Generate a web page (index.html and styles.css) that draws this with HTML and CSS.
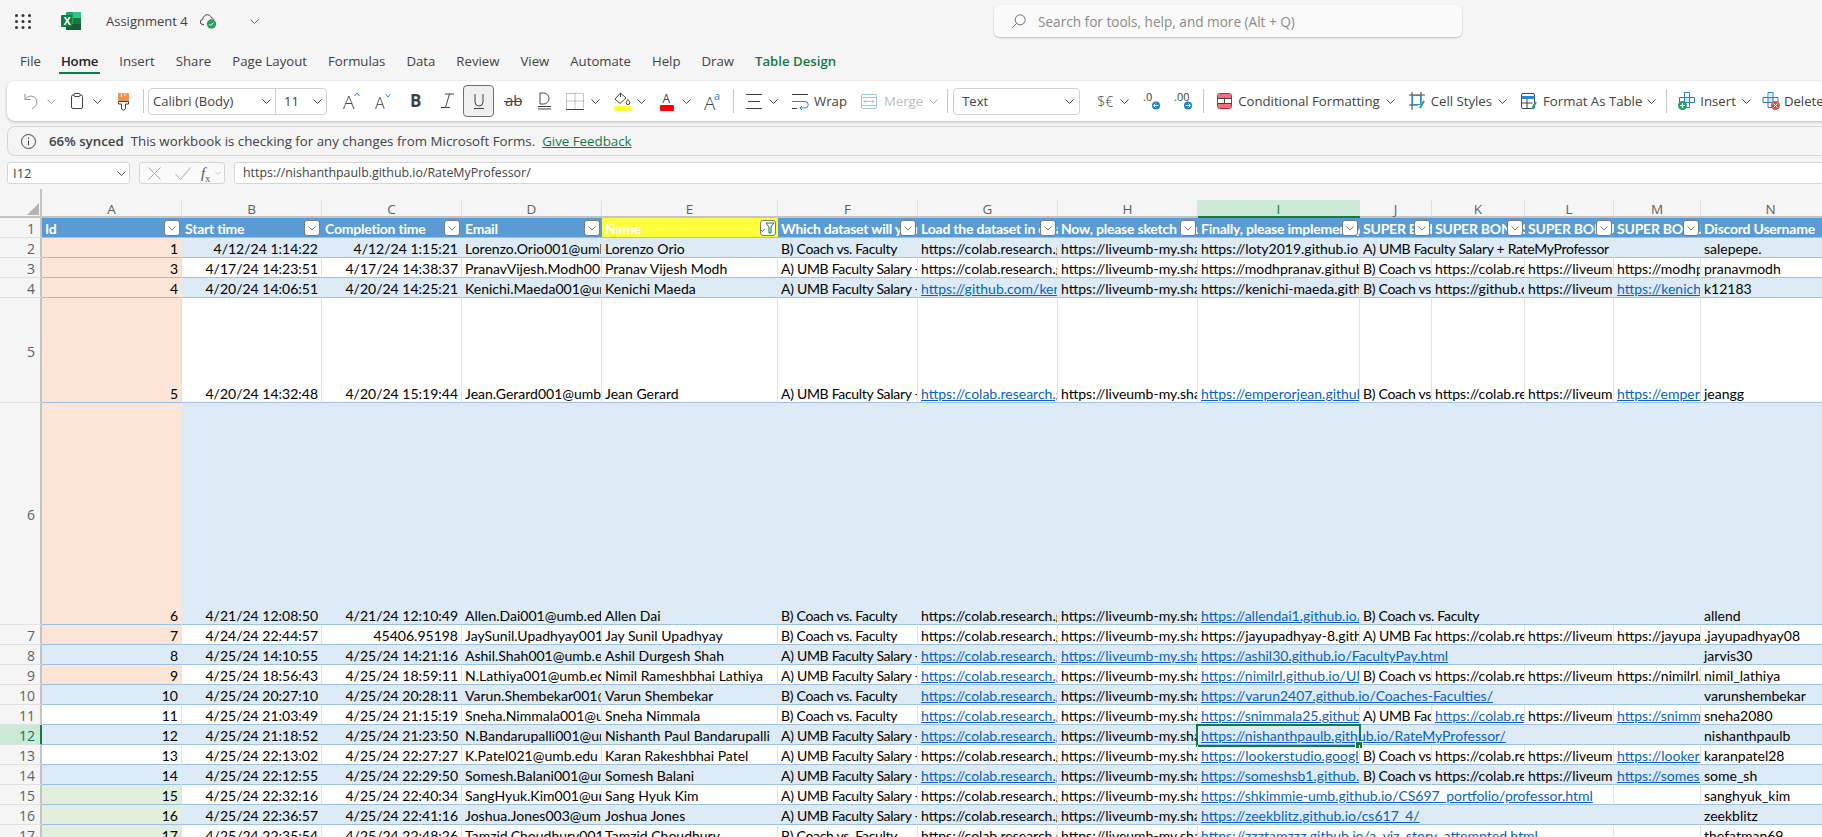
FILE: index.html
```html
<!DOCTYPE html>
<html lang="en">
<head>
<meta charset="utf-8">
<title>Assignment 4</title>
<link rel="stylesheet" href="styles.css">
</head>
<body>
<svg class="defs" width="0" height="0" aria-hidden="true">
  <symbol id="chev" viewBox="0 0 9 5"><path d="M.5.5l4 4 4-4" fill="none" stroke="currentColor"/></symbol>
</svg>
<div class="app">
  <header class="topbar">
    <svg class="apps" width="16" height="15" viewBox="0 0 16 15" fill="#333"><circle cx="1.5" cy="1.5" r="1.5"/><circle cx="8" cy="1.5" r="1.5"/><circle cx="14.5" cy="1.5" r="1.5"/><circle cx="1.5" cy="7.5" r="1.5"/><circle cx="8" cy="7.5" r="1.5"/><circle cx="14.5" cy="7.5" r="1.5"/><circle cx="1.5" cy="13.5" r="1.5"/><circle cx="8" cy="13.5" r="1.5"/><circle cx="14.5" cy="13.5" r="1.5"/></svg>
    <svg class="xl" width="20" height="18" viewBox="0 0 20 18"><rect x="5" width="15" height="18" rx="1" fill="#21a366"/><rect x="12" width="8" height="6" fill="#33c481"/><rect x="5" y="12" width="15" height="6" fill="#185c37"/><rect x="12" y="6" width="8" height="6" fill="#107c41"/><rect y="3" width="11" height="12" rx="1" fill="#107c41"/><text x="2.4" y="13" class="xl-x">X</text></svg>
    <span class="doc">Assignment 4</span>
    <svg class="cloud" width="17" height="15" viewBox="0 0 17 15"><path d="M4 10.5H3a2.5 2.5 0 0 1-.3-5C3 2.5 5 .7 7.200.7c2 0 3.700 1.300 4.300 3.200 1.300.2 2.200 1.100 2.500 2.100" fill="none" stroke="#424242"/><circle cx="11.500" cy="10" r="4.700" fill="#2f9e5b"/><path d="M9.300 10l1.500 1.500 2.700-2.800" fill="none" stroke="#fff"/></svg>
    <svg class="doc-chev" width="9" height="5"><use href="#chev"/></svg>
    <div class="search">
      <svg width="15" height="15" viewBox="0 0 15 15" fill="none" stroke="#707070"><circle cx="9.200" cy="5.800" r="5"/><path d="M5.500 9.500L.8 14.200"/></svg>
      <span>Search for tools, help, and more (Alt + Q)</span>
    </div>
  </header>

  <nav class="tabs">
    <span>File</span><span class="tab-on">Home</span><span>Insert</span><span>Share</span><span>Page Layout</span><span>Formulas</span><span>Data</span><span>Review</span><span>View</span><span>Automate</span><span>Help</span><span>Draw</span><span class="tab-ctx">Table Design</span>
  </nav>

  <div class="ribbon">
    <svg width="14" height="16" viewBox="0 0 14 16" fill="none" stroke="#8f8f8f"><path d="M1 1v5.500h5.500M1 6.500C3 3.500 6 2.500 9 3.500c3.500 1.500 4.500 5 3.500 8-.7 1.800-2.500 3.300-4.500 4"/></svg>
    <svg class="chev g9 dim" width="9" height="5"><use href="#chev"/></svg>
    <svg class="g15" width="12" height="16" viewBox="0 0 12 16" fill="none" stroke="#424242"><rect x=".5" y="2" width="11" height="13.500" rx="1.500"/><rect x="3" y=".5" width="6" height="3" rx="1" fill="#fff"/></svg>
    <svg class="chev g10" width="9" height="5"><use href="#chev"/></svg>
    <svg class="g16" width="11" height="17" viewBox="0 0 11 17"><rect width="11" height="8" rx="1" fill="#f0914f"/><path d="M3.500 0v4M7 0v3" stroke="#fff" stroke-width=".8"/><path d="M.5 8.500h10v2.500H7.500v4a2 2 0 0 1-4 0v-4h-3z" fill="#fff" stroke="#424242"/></svg>
    <i class="vr g14"></i>
    <div class="select font-select g4">
      <span class="fs-name">Calibri (Body)<svg class="chev" width="9" height="5"><use href="#chev"/></svg></span>
      <span class="fs-size">11<svg class="chev" width="9" height="5"><use href="#chev"/></svg></span>
    </div>
    <svg class="g16" width="18" height="20" viewBox="0 0 18 20"><text x="0" y="18" class="gl gl-a">A</text><path d="M11.500 5l2.500-3 2.500 3" fill="none" stroke="#2b88d8"/></svg>
    <svg class="g14" width="17" height="20" viewBox="0 0 17 20"><text x="0" y="18" class="gl gl-a2">A</text><path d="M10.500 3l2.500 3 2.500-3" fill="none" stroke="#2b88d8"/></svg>
    <svg class="g18" width="11" height="18" viewBox="0 0 11 18"><text x="0" y="15" class="gl gl-b">B</text></svg>
    <svg class="g20" width="13" height="18" viewBox="0 0 13 18" fill="none" stroke="#424242"><path d="M4 2h9M0 15.500h9M8.500 2L4.500 15.500"/></svg>
    <span class="u-btn g9"><svg width="12" height="17" viewBox="0 0 12 17" fill="none" stroke="#424242"><path d="M2 1v8a4 4 0 0 0 8 0V1M1 15.500h10"/></svg></span>
    <svg class="g10" width="18" height="20" viewBox="0 0 18 20"><text x="1" y="15" class="gl gl-ab">ab</text><path d="M0 10.500h18" stroke="#424242"/></svg>
    <svg class="g16" width="13" height="18" viewBox="0 0 13 18" fill="none" stroke="#424242"><path d="M2 1v11h3.500a5.500 5.500 0 0 0 0-11zM0 14.500h13M0 17h13"/></svg>
    <svg class="g15" width="18" height="17" viewBox="0 0 18 17" fill="none" stroke="#8a8a8a" stroke-dasharray="1 1"><path d="M.5.500h17v15M.5.500v15M9 .5v15M.5 8h17"/><path d="M0 16.500h18" stroke="#424242" stroke-dasharray="none"/></svg>
    <svg class="chev g7" width="9" height="5"><use href="#chev"/></svg>
    <svg class="g14" width="17" height="19" viewBox="0 0 17 19"><path d="M6.500 1L1 7l5 4.500L12 6zM6.500 1v4" fill="none" stroke="#424242"/><path d="M14 7.500c1 1.500 1.800 2.300 1.800 3.300a1.800 1.800 0 0 1-3.600 0c0-1 .8-1.800 1.800-3.300z" fill="none" stroke="#424242"/><rect y="14" width="17" height="5" rx="1" fill="#ffff3b"/></svg>
    <svg class="chev g6" width="9" height="5"><use href="#chev"/></svg>
    <svg class="g14" width="14" height="20" viewBox="0 0 14 20"><text x="2.500" y="12" class="gl gl-fc">A</text><rect y="14" width="14" height="6" rx="1" fill="#f00"/></svg>
    <svg class="chev g8" width="9" height="5"><use href="#chev"/></svg>
    <svg class="g13" width="16" height="20" viewBox="0 0 16 20"><text x="0" y="19" class="gl gl-a">A</text><text x="10" y="9" class="gl gl-sup">a</text></svg>
    <i class="vr g13"></i>
    <svg class="g12" width="16" height="15" viewBox="0 0 16 15" stroke="#424242"><path d="M0 .5h16M2 7.500h12M0 14.500h16"/></svg>
    <svg class="chev g7" width="9" height="5"><use href="#chev"/></svg>
    <svg class="g14" width="16" height="15" viewBox="0 0 16 15" fill="none"><path d="M0 .5h16M0 14.500h5" stroke="#424242"/><path d="M0 7.500h13a2.800 2.800 0 0 1 0 6.500H8m2-2l-2 2 2 2" stroke="#2b88d8"/></svg>
    <span class="lbl g6">Wrap</span>
    <svg class="g14" width="16" height="15" viewBox="0 0 16 15" fill="none" stroke="#9cc7e6"><rect x=".5" y=".5" width="15" height="14" rx="1.500"/><path d="M3 7.500h10M5 5.500l-2 2 2 2M11 5.500l2 2-2 2M.5 3.500h15M.5 11.500h15"/></svg>
    <span class="lbl lbl-off g7">Merge</span>
    <svg class="chev g6 dim" width="9" height="5"><use href="#chev"/></svg>
    <i class="vr g9"></i>
    <div class="select fmt-select g5"><span>Text</span><svg class="chev" width="9" height="5"><use href="#chev"/></svg></div>
    <span class="lbl currency g17">$€</span>
    <svg class="chev g7" width="9" height="5"><use href="#chev"/></svg>
    <svg class="g14" width="17" height="18" viewBox="0 0 17 18"><text x="0" y="9" class="gl gl-d">.0</text><circle cx="13" cy="13.500" r="4" fill="#1f7fc4"/><path d="M15.500 13.500h-5m2-2l-2 2 2 2" fill="none" stroke="#fff"/></svg>
    <svg class="g14" width="18" height="18" viewBox="0 0 18 18"><text x="0" y="9" class="gl gl-d">.00</text><circle cx="14" cy="13.500" r="4" fill="#1f7fc4"/><path d="M11.500 13.500h5m-2-2l2 2-2 2" fill="none" stroke="#fff"/></svg>
    <i class="vr g11"></i>
    <svg class="g13" width="15" height="16" viewBox="0 0 15 16"><rect x=".5" y=".5" width="14" height="15" rx="2" fill="#fff" stroke="#c4262e"/><rect x="1" y="1" width="13" height="4" fill="#f1707b"/><rect x="1" y="10" width="13" height="5" fill="#f1707b"/><path d="M.5 5.500h14M.5 10.500h14M7.500 5.500v5" stroke="#424242"/></svg>
    <span class="lbl g6">Conditional Formatting</span>
    <svg class="chev g6" width="9" height="5"><use href="#chev"/></svg>
    <svg class="g14" width="16" height="18" viewBox="0 0 16 18" fill="none" stroke="#424242"><path d="M3 0v18M12 0v11M0 3h16M0 13h9"/><path d="M3.500 3.500h8v9h-8z" stroke="#2b88d8"/><path d="M15 9l-4 7" stroke="#21a366" stroke-width="2"/></svg>
    <span class="lbl g6">Cell Styles</span>
    <svg class="chev g6" width="9" height="5"><use href="#chev"/></svg>
    <svg class="g14" width="16" height="17" viewBox="0 0 16 17" fill="none" stroke="#424242"><rect x=".5" y=".5" width="13" height="15" rx="1.500"/><path d="M.5 4.500h13" stroke="#2b88d8" stroke-width="3"/><path d="M.5 10h11M6 6v10"/><path d="M15 9l-4 7" stroke="#21a366" stroke-width="2"/></svg>
    <span class="lbl g6">Format As Table</span>
    <svg class="chev g5" width="9" height="5"><use href="#chev"/></svg>
    <i class="vr g10"></i>
    <svg class="g11" width="17" height="18" viewBox="0 0 17 18" fill="none"><path d="M6.500.5h5v5h5v5h-5v5h-5v-5h-5v-5h5z" stroke="#1f7fc4" fill="#fff"/><path d="M6.500 5.500h5v5h-5z" fill="#cfe6f7" stroke="#1f7fc4"/><circle cx="4.500" cy="13.500" r="4.500" fill="#21a366"/><path d="M2 13.500h5M4.500 11v5" stroke="#fff"/></svg>
    <span class="lbl g5">Insert</span>
    <svg class="chev g6" width="9" height="5"><use href="#chev"/></svg>
    <svg class="g12" width="17" height="18" viewBox="0 0 17 18" fill="none"><path d="M5 .5h5v5h5v5h-5v5H5v-5H0v-5h5z" stroke="#1f7fc4" fill="#fff"/><path d="M5 5.500h5v5H5z" fill="#cfe6f7" stroke="#1f7fc4"/><circle cx="12.500" cy="13.500" r="4.500" fill="#e0533f"/><path d="M10.500 11.500l4 4m0-4l-4 4" stroke="#fff"/></svg>
    <span class="lbl g4">Delete</span>
  </div>

  <div class="banner">
    <svg width="15" height="15" viewBox="0 0 15 15" fill="none" stroke="#424242"><circle cx="7.500" cy="7.500" r="7"/><path d="M7.500 6.500v5M7.500 3.500v1.500"/></svg>
    <b>66% synced</b>
    <span class="msg">This workbook is checking for any changes from Microsoft Forms.</span>
    <a class="fb">Give Feedback</a>
  </div>

  <div class="fbar">
    <div class="namebox"><span>I12</span><svg class="chev" width="9" height="5"><use href="#chev"/></svg></div>
    <div class="fbtns">
      <svg width="13" height="13" viewBox="0 0 13 13" stroke="#a8a8a8"><path d="M.5.5l12 12M12.500.5l-12 12"/></svg>
      <svg class="fchk" width="16" height="13" viewBox="0 0 16 13" fill="none" stroke="#a8a8a8"><path d="M.5 7l5 5.500L15.500.5"/></svg>
      <span class="fx"><em>f</em><sub>x</sub></span>
      <svg class="chev dim fxc" width="6" height="4" viewBox="0 0 9 5"><use href="#chev"/></svg>
    </div>
    <div class="finput">https://nishanthpaulb.github.io/RateMyProfessor/</div>
  </div>

  <div class="sheet">
    <table class="grid">
      <colgroup>
        <col class="c-rh"><col class="c-140"><col class="c-140"><col class="c-140"><col class="c-140"><col class="c-176"><col class="c-140"><col class="c-140"><col class="c-140"><col class="c-i"><col class="c-j"><col class="c-k"><col class="c-l"><col class="c-m"><col class="c-n">
      </colgroup>
      <thead>
        <tr class="lead">
          <th class="corner"><svg width="12" height="12" viewBox="0 0 12 12"><path d="M12 0v12H0z" fill="#b4b4b4"/></svg></th>
          <th><span>A</span></th><th><span>B</span></th><th><span>C</span></th><th><span>D</span></th><th><span>E</span></th><th><span>F</span></th><th><span>G</span></th><th><span>H</span></th><th class="col-sel"><span>I</span></th><th><span>J</span></th><th><span>K</span></th><th><span>L</span></th><th><span>M</span></th><th><span>N</span></th>
        </tr>
      </thead>
      <tbody>
        <tr class="tblhead">
          <th class="rh">1</th>
          <td>Id<i class="fbtn"><svg width="9" height="5"><use href="#chev"/></svg></i></td>
          <td>Start time<i class="fbtn"><svg width="9" height="5"><use href="#chev"/></svg></i></td>
          <td>Completion time<i class="fbtn"><svg width="9" height="5"><use href="#chev"/></svg></i></td>
          <td>Email<i class="fbtn"><svg width="9" height="5"><use href="#chev"/></svg></i></td>
          <td class="yel">Name<i class="fbtn"><svg class="funnel" width="14" height="12" viewBox="0 0 14 12" fill="none" stroke="#107c41"><path d="M5 1h8L10 5v6H8V5zM0 8l1.500 1.500L3.500 7"/></svg></i></td>
          <td>Which dataset will you be using?<i class="fbtn"><svg width="9" height="5"><use href="#chev"/></svg></i></td>
          <td>Load the dataset in colab notebook<i class="fbtn"><svg width="9" height="5"><use href="#chev"/></svg></i></td>
          <td>Now, please sketch your visualization<i class="fbtn"><svg width="9" height="5"><use href="#chev"/></svg></i></td>
          <td>Finally, please implement your visualization<i class="fbtn"><svg width="9" height="5"><use href="#chev"/></svg></i></td>
          <td>SUPER BONUS<i class="fbtn"><svg width="9" height="5"><use href="#chev"/></svg></i></td>
          <td>SUPER BONUS 2<i class="fbtn"><svg width="9" height="5"><use href="#chev"/></svg></i></td>
          <td>SUPER BONUS 3<i class="fbtn"><svg width="9" height="5"><use href="#chev"/></svg></i></td>
          <td>SUPER BONUS 4<i class="fbtn"><svg width="9" height="5"><use href="#chev"/></svg></i></td>
          <td>Discord Username</td>
        </tr>
        <tr class="band">
          <th class="rh">2</th><td class="num or">1</td><td class="num">4/12/24 1:14:22</td><td class="num">4/12/24 1:15:21</td><td>Lorenzo.Orio001@umb.edu</td><td>Lorenzo Orio</td><td class="ds">B) Coach vs. Faculty</td><td>https://colab.research.google.com/</td><td>https://liveumb-my.sharepoint.com/</td><td>https://loty2019.github.io/</td><td colspan="4" class="ds">A) UMB Faculty Salary + RateMyProfessor</td><td>salepepe.</td>
        </tr>
        <tr>
          <th class="rh">3</th><td class="num or">3</td><td class="num">4/17/24 14:23:51</td><td class="num">4/17/24 14:38:37</td><td>PranavVijesh.Modh001@umb.edu</td><td>Pranav Vijesh Modh</td><td class="ds">A) UMB Faculty Salary - RMP</td><td>https://colab.research.google.com/</td><td>https://liveumb-my.sharepoint.com/</td><td>https://modhpranav.github.io/</td><td class="ds">B) Coach vs. Faculty</td><td>https://colab.research</td><td>https://liveumb-my</td><td>https://modhpranav</td><td>pranavmodh</td>
        </tr>
        <tr class="band">
          <th class="rh">4</th><td class="num or">4</td><td class="num">4/20/24 14:06:51</td><td class="num">4/20/24 14:25:21</td><td>Kenichi.Maeda001@umb.edu</td><td>Kenichi Maeda</td><td class="ds">A) UMB Faculty Salary - RMP</td><td><a>https://github.com/kenichi-maeda</a></td><td>https://liveumb-my.sharepoint.com/</td><td>https://kenichi-maeda.github.io/</td><td class="ds">B) Coach vs. Faculty</td><td>https://github.com/kenichi</td><td>https://liveumb-my</td><td><a>https://kenichi-maeda</a></td><td>k12183</td>
        </tr>
        <tr class="h105">
          <th class="rh">5</th><td class="num or">5</td><td class="num">4/20/24 14:32:48</td><td class="num">4/20/24 15:19:44</td><td>Jean.Gerard001@umb.edu</td><td>Jean Gerard</td><td class="ds">A) UMB Faculty Salary - RMP</td><td><a>https://colab.research.google.com/</a></td><td>https://liveumb-my.sharepoint.com/</td><td><a>https://emperorjean.github.io/</a></td><td class="ds">B) Coach vs. Faculty</td><td>https://colab.research</td><td>https://liveumb-my</td><td><a>https://emperorjean</a></td><td>jeangg</td>
        </tr>
        <tr class="band h222">
          <th class="rh">6</th><td class="num or">6</td><td class="num">4/21/24 12:08:50</td><td class="num">4/21/24 12:10:49</td><td>Allen.Dai001@umb.edu</td><td>Allen Dai</td><td class="ds">B) Coach vs. Faculty</td><td>https://colab.research.google.com/</td><td>https://liveumb-my.sharepoint.com/</td><td><a>https://allendai1.github.io/project</a></td><td colspan="4" class="ds">B) Coach vs. Faculty</td><td>allend</td>
        </tr>
        <tr>
          <th class="rh">7</th><td class="num or">7</td><td class="num">4/24/24 22:44:57</td><td class="num">45406.95198</td><td>JaySunil.Upadhyay001@umb.edu</td><td>Jay Sunil Upadhyay</td><td class="ds">B) Coach vs. Faculty</td><td>https://colab.research.google.com/</td><td>https://liveumb-my.sharepoint.com/</td><td>https://jayupadhyay-8.github.io/</td><td class="ds">A) UMB Faculty Salary</td><td>https://colab.research</td><td>https://liveumb-my</td><td>https://jayupadhyay</td><td>.jayupadhyay08</td>
        </tr>
        <tr class="band">
          <th class="rh">8</th><td class="num">8</td><td class="num">4/25/24 14:10:55</td><td class="num">4/25/24 14:21:16</td><td>Ashil.Shah001@umb.edu</td><td>Ashil Durgesh Shah</td><td class="ds">A) UMB Faculty Salary - RMP</td><td><a>https://colab.research.google.com/</a></td><td><a>https://liveumb-my.sharepoint.com/</a></td><td colspan="5"><a>https://ashil30.github.io/FacultyPay.html</a></td><td>jarvis30</td>
        </tr>
        <tr>
          <th class="rh">9</th><td class="num or">9</td><td class="num">4/25/24 18:56:43</td><td class="num">4/25/24 18:59:11</td><td>N.Lathiya001@umb.edu</td><td>Nimil Rameshbhai Lathiya</td><td class="ds">A) UMB Faculty Salary - RMP</td><td><a>https://colab.research.google.com/</a></td><td>https://liveumb-my.sharepoint.com/</td><td><a>https://nimilrl.github.io/UMB-Faculty</a></td><td class="ds">B) Coach vs. Faculty</td><td>https://colab.research</td><td>https://liveumb-my</td><td>https://nimilrl.github</td><td>nimil_lathiya</td>
        </tr>
        <tr class="band">
          <th class="rh">10</th><td class="num">10</td><td class="num">4/25/24 20:27:10</td><td class="num">4/25/24 20:28:11</td><td>Varun.Shembekar001@umb.edu</td><td>Varun Shembekar</td><td class="ds">B) Coach vs. Faculty</td><td><a>https://colab.research.google.com/</a></td><td>https://liveumb-my.sharepoint.com/</td><td colspan="5"><a>https://varun2407.github.io/Coaches-Faculties/</a></td><td>varunshembekar</td>
        </tr>
        <tr>
          <th class="rh">11</th><td class="num">11</td><td class="num">4/25/24 21:03:49</td><td class="num">4/25/24 21:15:19</td><td>Sneha.Nimmala001@umb.edu</td><td>Sneha Nimmala</td><td class="ds">B) Coach vs. Faculty</td><td><a>https://colab.research.google.com/</a></td><td>https://liveumb-my.sharepoint.com/</td><td><a>https://snimmala25.github.io/project</a></td><td class="ds">A) UMB Faculty Salary</td><td><a>https://colab.research</a></td><td>https://liveumb-my</td><td><a>https://snimmala25</a></td><td>sneha2080</td>
        </tr>
        <tr class="band row-sel">
          <th class="rh">12</th><td class="num">12</td><td class="num">4/25/24 21:18:52</td><td class="num">4/25/24 21:23:50</td><td>N.Bandarupalli001@umb.edu</td><td>Nishanth Paul Bandarupalli</td><td class="ds">A) UMB Faculty Salary - RMP</td><td><a>https://colab.research.google.com/</a></td><td>https://liveumb-my.sharepoint.com/</td><td colspan="5" class="sel-host"><i class="sel"></i><a>https://nishanthpaulb.github.io/RateMyProfessor/</a></td><td>nishanthpaulb</td>
        </tr>
        <tr>
          <th class="rh">13</th><td class="num">13</td><td class="num">4/25/24 22:13:02</td><td class="num">4/25/24 22:27:27</td><td>K.Patel021@umb.edu</td><td>Karan Rakeshbhai Patel</td><td class="ds">A) UMB Faculty Salary - RMP</td><td>https://colab.research.google.com/</td><td>https://liveumb-my.sharepoint.com/</td><td><a>https://lookerstudio.google.com/</a></td><td class="ds">B) Coach vs. Faculty</td><td>https://colab.research</td><td>https://liveumb-my</td><td><a>https://lookerstudio</a></td><td>karanpatel28</td>
        </tr>
        <tr class="band">
          <th class="rh">14</th><td class="num">14</td><td class="num">4/25/24 22:12:55</td><td class="num">4/25/24 22:29:50</td><td>Somesh.Balani001@umb.edu</td><td>Somesh Balani</td><td class="ds">A) UMB Faculty Salary - RMP</td><td><a>https://colab.research.google.com/</a></td><td>https://liveumb-my.sharepoint.com/</td><td><a>https://someshsb1.github.io/project</a></td><td class="ds">B) Coach vs. Faculty</td><td>https://colab.research</td><td>https://liveumb-my</td><td><a>https://someshsb1</a></td><td>some_sh</td>
        </tr>
        <tr>
          <th class="rh">15</th><td class="num gr">15</td><td class="num">4/25/24 22:32:16</td><td class="num">4/25/24 22:40:34</td><td>SangHyuk.Kim001@umb.edu</td><td>Sang Hyuk Kim</td><td class="ds">A) UMB Faculty Salary - RMP</td><td>https://colab.research.google.com/</td><td>https://liveumb-my.sharepoint.com/</td><td colspan="4"><a>https://shkimmie-umb.github.io/CS697_portfolio/professor.html</a></td><td></td><td>sanghyuk_kim</td>
        </tr>
        <tr class="band">
          <th class="rh">16</th><td class="num gr">16</td><td class="num">4/25/24 22:36:57</td><td class="num">4/25/24 22:41:16</td><td>Joshua.Jones003@umb.edu</td><td>Joshua Jones</td><td class="ds">A) UMB Faculty Salary - RMP</td><td>https://colab.research.google.com/</td><td>https://liveumb-my.sharepoint.com/</td><td colspan="5"><a>https://zeekblitz.github.io/cs617_4/</a></td><td>zeekblitz</td>
        </tr>
        <tr>
          <th class="rh">17</th><td class="num gr">17</td><td class="num">4/25/24 22:35:54</td><td class="num">4/25/24 22:48:26</td><td>Tamzid.Choudhury001@umb.edu</td><td>Tamzid Choudhury</td><td class="ds">B) Coach vs. Faculty</td><td>https://colab.research.google.com/</td><td>https://liveumb-my.sharepoint.com/</td><td colspan="4"><a>https://zzztamzzz.github.io/a_viz_story_attempted.html</a></td><td></td><td>thefatman69</td>
        </tr>
      </tbody>
    </table>
  </div>
</div>
</body>
</html>
```

FILE: styles.css
```css
* { box-sizing: border-box; }
html, body { margin: 0; height: 100%; overflow: hidden; background: #f5f5f5; }
body { font-family: "Open Sans", sans-serif; font-size: 13px; color: #424242; }
.defs { position: absolute; }
svg { display: block; flex: none; overflow: visible; }
i { font-style: normal; }
.app { width: 1822px; height: 837px; overflow: hidden; }

.topbar { height: 42px; display: flex; align-items: center; padding-left: 15px; }
.xl { margin-left: 30px; }
.xl-x { font: 700 11px "Liberation Sans", sans-serif; fill: #fff; }
.doc { margin-left: 25px; width: 94px; white-space: nowrap; }
.doc-chev { margin-left: 33px; color: #616161; }
.search { margin-left: 735px; width: 468px; height: 32px; display: flex; align-items: center; gap: 12px; padding-left: 17px; background: #fafafa; border-radius: 6px; box-shadow: 0 1px 2px rgba(0,0,0,.22); color: #8a8a8a; font-size: 13.6px; }

.tabs { height: 34px; display: flex; align-items: center; gap: 21px; padding: 4px 0 0 20px; white-space: nowrap; font-size: 13.2px; }
.tabs span { position: relative; line-height: 26px; }
.tab-on { font-weight: 600; color: #242424; letter-spacing: -.2px; margin-left: -1px; }
.tab-on::after { content: ""; position: absolute; left: -2px; right: -2px; bottom: 0; height: 2px; background: #107c41; }
.tab-ctx { color: #0e7a43; font-weight: 600; }

.ribbon { margin: 5px -20px 0 7px; height: 40px; display: flex; align-items: center; padding-left: 17px; background: #fff; border-radius: 8px 0 0 8px; box-shadow: 0 1px 3px rgba(0,0,0,.25); color: #424242; white-space: nowrap; overflow: hidden; }
.chev { color: #424242; }
.dim { color: #a8a8a8; }
.vr { flex: none; width: 1px; height: 24px; background: #c8c8c8; }
.g4 { margin-left: 4px; } .g5 { margin-left: 5px; } .g6 { margin-left: 6px; } .g7 { margin-left: 7px; } .g8 { margin-left: 8px; }
.g9 { margin-left: 9px; } .g10 { margin-left: 10px; } .g11 { margin-left: 11px; } .g12 { margin-left: 12px; } .g13 { margin-left: 13px; } .g14 { margin-left: 14px; }
.g15 { margin-left: 15px; } .g16 { margin-left: 16px; } .g17 { margin-left: 17px; } .g18 { margin-left: 18px; } .g20 { margin-left: 20px; }
.select { height: 27px; display: flex; align-items: center; border: 1px solid #d1d1d1; border-radius: 4px; background: #fff; }
.font-select { width: 179px; }
.fs-name { width: 127px; height: 100%; display: flex; align-items: center; justify-content: space-between; padding: 0 4px 0 4px; border-right: 1px solid #d1d1d1; }
.fs-size { flex: 1; display: flex; align-items: center; justify-content: space-between; padding: 0 4px 0 8px; }
.fmt-select { width: 127px; justify-content: space-between; padding: 0 5px 0 8px; }
.gl { font-family: "Open Sans", sans-serif; fill: #424242; }
.gl-a { font-size: 19px; font-weight: 300; }
.gl-a2 { font-size: 16px; font-weight: 300; }
.gl-b { font-size: 17px; font-weight: 700; }
.gl-ab { font-size: 15px; }
.gl-fc { font-size: 12px; }
.gl-sup { font-size: 11px; fill: #2b88d8; }
.gl-d { font-size: 11px; }
.u-btn { flex: none; width: 31px; height: 32px; display: flex; align-items: center; justify-content: center; background: #f0f0f0; border: 1px solid #6f6f6f; border-radius: 4px; }
.lbl { flex: none; font-size: 13.2px; }
.lbl-off { color: #bdbdbd; }
.currency { font-size: 14px; font-weight: 300; }

.banner { margin: 5px -20px 0 7px; height: 30px; display: flex; align-items: center; padding-left: 13px; border: 1px solid #d6d6d6; border-right: 0; border-radius: 8px 0 0 8px; white-space: nowrap; font-size: 13.3px; }
.banner b { margin-left: 13px; font-weight: 600; }
.msg { margin-left: 7px; }
.fb { margin-left: 7px; color: #0e7a43; text-decoration: underline; }

.fbar { margin: 6px -20px 0 7px; height: 22px; display: flex; }
.namebox { flex: none; width: 123px; display: flex; align-items: center; justify-content: space-between; padding: 0 3px 0 5px; background: #fff; border: 1px solid #d6d6d6; border-radius: 3px; }
.fbtns { flex: none; margin-left: 9px; width: 86px; display: flex; align-items: center; padding-left: 8px; background: #fafafa; border: 1px solid #d6d6d6; border-radius: 3px; }
.fchk { margin-left: 14px; }
.fx { margin-left: 10px; font: 15px "Liberation Serif", serif; color: #555; line-height: 18px; }
.fx sub { font-size: 10px; line-height: 0; }
.fxc { margin-left: 5px; }
.finput { flex: 1; margin-left: 9px; padding-left: 8px; line-height: 20px; background: #fff; border: 1px solid #d6d6d6; border-radius: 3px; font-size: 12.4px; }

.sheet { margin-top: 5px; height: 648px; overflow: hidden; }
.grid { table-layout: fixed; width: 1841px; border-collapse: separate; border-spacing: 0; font-family: Lato, sans-serif; font-size: 14px; color: #000; }
.c-rh { width: 42px; } .c-140 { width: 140px; } .c-176 { width: 176px; } .c-i { width: 162px; } .c-j { width: 72px; } .c-k { width: 93px; } .c-l { width: 89px; } .c-m { width: 87px; } .c-n { width: 140px; }
.lead th { height: 29px; padding: 0; vertical-align: bottom; font: 400 13.5px "Open Sans", sans-serif; color: #616161; border-bottom: 2px solid #c4c4c4; }
.lead th span { display: block; height: 16px; line-height: 18px; border-right: 1px solid #e0e0e0; }
.lead .corner { position: relative; border-right: 2px solid #c4c4c4; vertical-align: top; }
.corner svg { position: absolute; left: 27px; top: 14px; }
.lead .col-sel { color: #107c41; border-bottom-color: #107c41; }
.lead .col-sel span { background: #cce8d6; }

tbody tr { height: 20px; background: #fff; }
td { position: relative; height: 20px; padding: 0 3px; overflow: hidden; white-space: nowrap; vertical-align: bottom; line-height: 17px; border-right: 1px solid #e1e1e1; border-bottom: 1px solid #9bc2e6; }
.rh { padding: 2px 5px 0 0; text-align: right; vertical-align: middle; font: 400 14px/17px "Open Sans", sans-serif; color: #616161; background: #f5f5f5; border-right: 2px solid #c4c4c4; border-bottom: 1px solid #e1e1e1; }
.band { background: #ddebf7; }
.band td { border-right-color: transparent; }
.num { text-align: right; }
.ds { letter-spacing: -.3px; }
.or { background: #fce4d6; }
.gr { background: #e2efda; }
.h105, .h105 td, .h105 th { height: 105px; }
.h222, .h222 td, .h222 th { height: 222px; }
a { color: #0563c1; text-decoration: underline; }
.tblhead td { background: #5b9bd5; color: #fff; font-weight: 700; letter-spacing: -.22px; border-right: 0; border-bottom-color: #9bc2e6; }
.tblhead .yel { background: #ffff3b; }
.fbtn { position: absolute; right: 2px; top: 2px; width: 16px; height: 16px; display: flex; align-items: center; justify-content: center; background: #fff; border: 1px solid #7a7a7a; border-radius: 3px; color: #666; }
.fbtn svg { width: 8px; height: 4.5px; }
.fbtn .funnel { width: 14px; height: 12px; }
.row-sel .rh { background: #cce8d6; color: #107c41; border-right-color: #107c41; }
td.sel-host { overflow: visible; }
.sel { position: absolute; left: -2px; top: -1px; width: 165px; height: 23px; border: 2px solid #107c41; pointer-events: none; }
.sel::after { content: ""; position: absolute; right: -4px; bottom: -4px; width: 6px; height: 6px; background: #107c41; border: 1px solid #fff; }
```
